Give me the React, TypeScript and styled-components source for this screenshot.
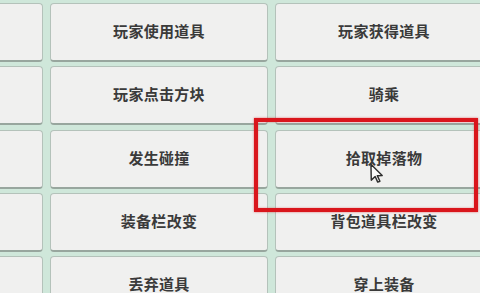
import styled, { createGlobalStyle } from "styled-components";

const GlobalStyle = createGlobalStyle`
  html, body {
    margin: 0;
    padding: 0;
    background: #cfe7da;
    overflow: hidden;
  }
  body {
    font-family: "Noto Sans CJK SC", "Noto Sans", sans-serif;
  }
`;

// rows of the event list, left column is cut off by the screenshot edge
const rows: [string, string][] = [
  ["玩家使用道具", "玩家获得道具"],
  ["玩家点击方块", "骑乘"],
  ["发生碰撞", "拾取掉落物"],
  ["装备栏改变", "背包道具栏改变"],
  ["丢弃道具", "穿上装备"],
];

export default function App() {
  return (
    <Screen>
      <GlobalStyle />
      <EventGrid>
        {rows.map(([mid, right]) => (
          <Row key={mid}>
            <EventButton />
            <EventButton>{mid}</EventButton>
            <EventButton>{right}</EventButton>
          </Row>
        ))}
      </EventGrid>
      <Highlight />
      <Cursor viewBox="0 0 13 18">
        <path
          d="M1.5 1.2 L11.6 11.2 L7.2 11.4 L9.6 16.4 L7.6 17.2 L5.3 12.2 L1.8 15.4 Z"
          fill="#fafafa"
          stroke="#2e2e2e"
          strokeWidth="1.3"
          strokeLinejoin="round"
        />
      </Cursor>
    </Screen>
  );
}

const Screen = styled.div`
  position: relative;
  width: 480px;
  height: 293px;
  overflow: hidden;
  background: #cfe7da;
`;

const EventGrid = styled.div`
  display: flex;
  flex-direction: column;
  gap: 4.3px;
  padding-top: 3px;
  margin-left: -24px;
`;

const Row = styled.div`
  display: grid;
  grid-template-columns: 67px 218px 218px;
  column-gap: 7px;
  height: 59px;
`;

const EventButton = styled.div`
  display: flex;
  align-items: center;
  justify-content: center;
  box-sizing: border-box;
  padding-bottom: 3px;
  background: #f0f0ef;
  border: 1px solid #b4c2ba;
  border-bottom: 2px solid #98a69e;
  border-radius: 4px;
  color: #3a3a3a;
  font-size: 15px;
  font-weight: 700;
  letter-spacing: 0.3px;
  white-space: nowrap;
`;

const Highlight = styled.div`
  position: absolute;
  left: 254px;
  top: 118px;
  width: 224px;
  height: 94px;
  box-sizing: border-box;
  border: 4px solid #d9161c;
  box-shadow: 0 0 2px rgba(217, 22, 28, 0.6), inset 0 0 2px rgba(217, 22, 28, 0.5);
`;

const Cursor = styled.svg`
  position: absolute;
  left: 369px;
  top: 163px;
  width: 15px;
  height: 20px;
`;
